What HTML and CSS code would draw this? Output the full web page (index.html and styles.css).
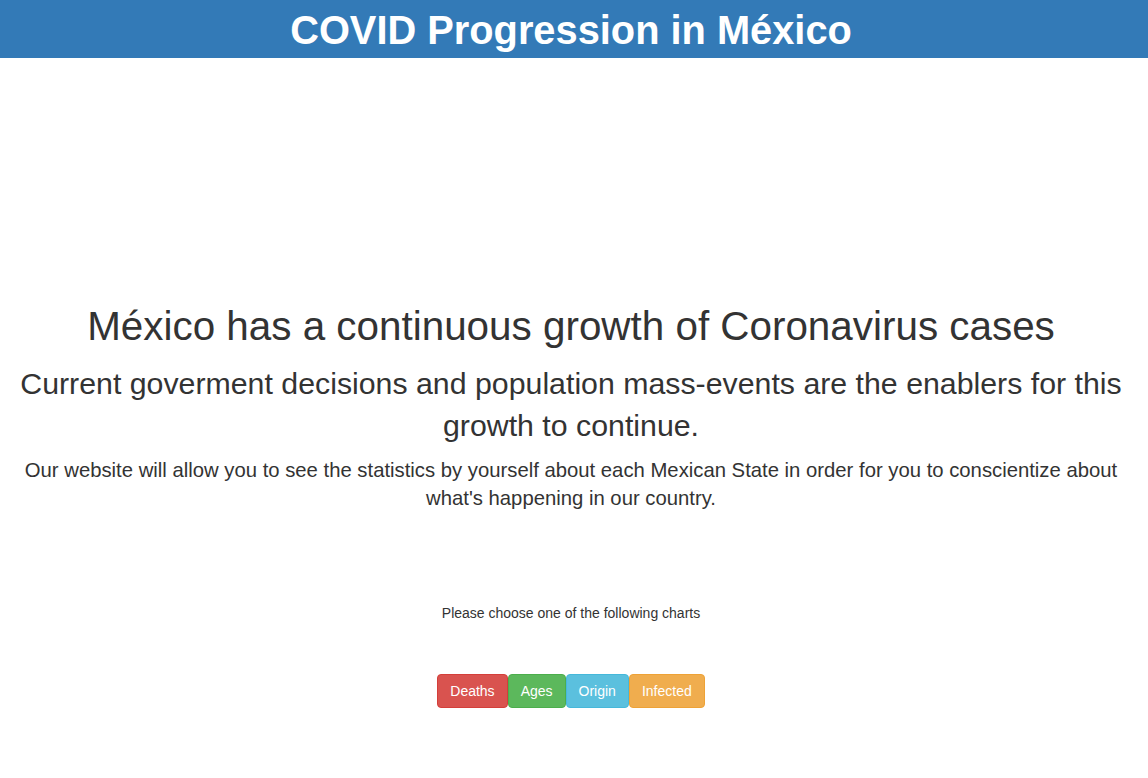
FILE: index.html
```html
<!DOCTYPE html>
<html lang="en">
<head>
<meta charset="utf-8">
<title>COVID Progression in México</title>
<link rel="stylesheet" href="styles.css">
</head>
<body>
<header class="topbar">
  <h1 class="topbar-title">COVID Progression in México</h1>
</header>
<main class="intro">
  <h2 class="headline">México has a continuous growth of Coronavirus cases</h2>
  <h3 class="subhead">Current goverment decisions and population mass-events are the enablers for this growth to continue.</h3>
  <p class="lead">Our website will allow you to see the statistics by yourself about each Mexican State in order for you to conscientize about what's happening in our country.</p>
  <p class="prompt">Please choose one of the following charts</p>
  <div class="buttons"><button class="btn btn-danger">Deaths</button><button class="btn btn-success">Ages</button><button class="btn btn-info">Origin</button><button class="btn btn-warning">Infected</button></div>
</main>
</body>
</html>
```

FILE: styles.css
```css
* { box-sizing: border-box; }
html, body { margin: 0; padding: 0; }
body {
  font-family: "Liberation Sans", Arial, Helvetica, sans-serif;
  color: #333333;
  background: #ffffff;
  font-size: 14px;
  line-height: 1.42857;
}
.topbar {
  background: #337ab7;
  height: 58px;
  display: flex;
  align-items: center;
  justify-content: center;
  padding: 3px 6px 0 0;
}
.topbar-title {
  margin: 0;
  color: #ffffff;
  font-size: 39.8px;
  font-weight: bold;
  line-height: 1;
}
.intro {
  display: flex;
  flex-direction: column;
  align-items: center;
  text-align: center;
  padding: 0 23px 0 17px;
}
.headline {
  margin: 246px 0 0;
  font-size: 40.4px;
  font-weight: normal;
  line-height: 1.1;
}
.subhead {
  margin: 15px 0 0;
  font-size: 30.3px;
  font-weight: normal;
  line-height: 42px;
}
.lead {
  margin: 9px 0 0;
  font-size: 20.3px;
  line-height: 28px;
}
.prompt {
  margin: 91px 0 0;
  font-size: 14px;
  line-height: 20px;
}
.buttons {
  margin-top: 51px;
  display: flex;
}
.btn {
  font-family: inherit;
  font-size: 14px;
  line-height: 20px;
  padding: 6px 12px;
  border: 1px solid transparent;
  border-radius: 4px;
  color: #ffffff;
  cursor: pointer;
}
.btn-danger { background: #d9534f; border-color: #d43f3a; }
.btn-success { background: #5cb85c; border-color: #4cae4c; }
.btn-info { background: #5bc0de; border-color: #46b8da; }
.btn-warning { background: #f0ad4e; border-color: #eea236; }
```
